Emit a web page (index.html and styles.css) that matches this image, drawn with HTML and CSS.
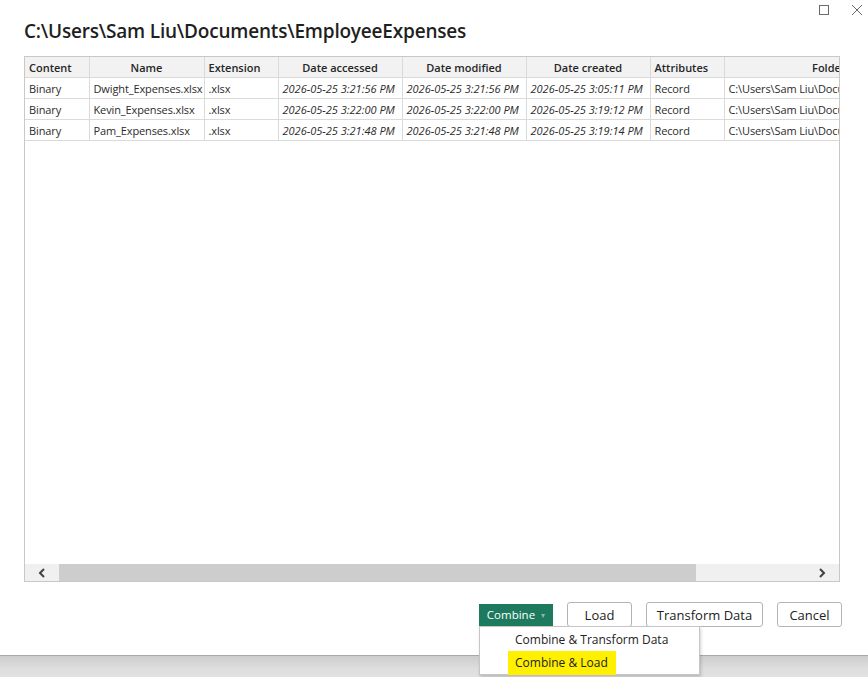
FILE: index.html
```html
<!DOCTYPE html>
<html lang="en">
<head>
<meta charset="utf-8">
<title>Folder preview</title>
<link rel="stylesheet" href="styles.css">
</head>
<body>
<div class="dialog">
  <div class="chrome">
    <svg class="chrome-btn" width="12" height="12" viewBox="0 0 12 12"><rect x="1.5" y="1.5" width="9" height="9" fill="none" stroke="#6a6a6a" stroke-width="1"/></svg>
    <svg class="chrome-btn" width="12" height="12" viewBox="0 0 12 12"><path d="M1 1 L11 11 M11 1 L1 11" stroke="#6a6a6a" stroke-width="1"/></svg>
  </div>
  <h1 class="title">C:\Users\Sam Liu\Documents\EmployeeExpenses</h1>

  <div class="grid-panel">
    <div class="grid-scroll">
      <table class="grid">
        <colgroup>
          <col class="c-content"><col class="c-name"><col class="c-ext"><col class="c-date"><col class="c-date"><col class="c-date"><col class="c-attr"><col class="c-folder">
        </colgroup>
        <thead>
          <tr>
            <th class="left">Content</th>
            <th>Name</th>
            <th class="left">Extension</th>
            <th>Date accessed</th>
            <th>Date modified</th>
            <th>Date created</th>
            <th class="left">Attributes</th>
            <th>Folder Path</th>
          </tr>
        </thead>
        <tbody>
          <tr>
            <td>Binary</td><td>Dwight_Expenses.xlsx</td><td>.xlsx</td>
            <td class="date">2026-05-25 3:21:56 PM</td><td class="date">2026-05-25 3:21:56 PM</td><td class="date">2026-05-25 3:05:11 PM</td>
            <td>Record</td><td>C:\Users\Sam Liu\Documents\EmployeeExpenses\</td>
          </tr>
          <tr>
            <td>Binary</td><td>Kevin_Expenses.xlsx</td><td>.xlsx</td>
            <td class="date">2026-05-25 3:22:00 PM</td><td class="date">2026-05-25 3:22:00 PM</td><td class="date">2026-05-25 3:19:12 PM</td>
            <td>Record</td><td>C:\Users\Sam Liu\Documents\EmployeeExpenses\</td>
          </tr>
          <tr>
            <td>Binary</td><td>Pam_Expenses.xlsx</td><td>.xlsx</td>
            <td class="date">2026-05-25 3:21:48 PM</td><td class="date">2026-05-25 3:21:48 PM</td><td class="date">2026-05-25 3:19:14 PM</td>
            <td>Record</td><td>C:\Users\Sam Liu\Documents\EmployeeExpenses\</td>
          </tr>
        </tbody>
      </table>
    </div>
    <div class="hscroll">
      <div class="hscroll-btn">
        <svg width="10" height="10" viewBox="0 0 10 10"><path d="M7 1 L3 5 L7 9" fill="none" stroke="#404040" stroke-width="2"/></svg>
      </div>
      <div class="hscroll-track"><div class="hscroll-thumb"></div></div>
      <div class="hscroll-btn">
        <svg width="10" height="10" viewBox="0 0 10 10"><path d="M3 1 L7 5 L3 9" fill="none" stroke="#404040" stroke-width="2"/></svg>
      </div>
    </div>
  </div>

  <div class="footer">
    <div class="split">
      <button class="btn-primary">Combine <span class="caret">&#9662;</span></button>
      <div class="menu">
        <div class="menu-item">Combine &amp; Transform Data</div>
        <div class="menu-item"><span class="mark">Combine &amp; Load</span></div>
      </div>
    </div>
    <button class="btn">Load</button>
    <button class="btn btn-wide">Transform Data</button>
    <button class="btn">Cancel</button>
  </div>
</div>
<div class="desktop"></div>
</body>
</html>
```

FILE: styles.css
```css
html, body {
  margin: 0;
  padding: 0;
  background: #ffffff;
  font-family: "Open Sans", "Noto Sans", sans-serif;
  color: #222;
  overflow: hidden;
}

.dialog {
  height: 656px;
  box-sizing: border-box;
  border-bottom: 1px solid #a9a9a9;
  background: #fff;
  display: flex;
  flex-direction: column;
  padding: 0 27px 0 24px;
}

/* window chrome: maximize + close */
.chrome {
  display: flex;
  justify-content: flex-end;
  gap: 21px;
  height: 15px;
  padding-top: 4px;
  margin-right: -22px;
}
.chrome-btn { display: block; }

.title {
  margin: 0;
  font-size: 19px;
  font-weight: 600;
  line-height: 24px;
  letter-spacing: -0.2px;
  color: #1f1f1f;
  height: 37px;
}

/* preview grid */
.grid-panel {
  width: 816px;
  height: 526px;
  box-sizing: border-box;
  border: 1px solid #c8c8c8;
  display: flex;
  flex-direction: column;
}
.grid-scroll {
  flex: 1;
  overflow: hidden;
}
.grid {
  border-collapse: collapse;
  table-layout: fixed;
  width: 936px;
  font-size: 11px;
  color: #2b2b2b;
}
.c-content { width: 64px; }
.c-name { width: 115px; }
.c-ext { width: 74px; }
.c-date { width: 124px; }
.c-attr { width: 74px; }
.c-folder { width: 237px; }

.grid th, .grid td {
  height: 20px;
  padding: 0 4px;
  border-right: 1px solid #dadada;
  border-bottom: 1px solid #dadada;
  white-space: nowrap;
  overflow: hidden;
  text-align: left;
}
.grid td { letter-spacing: -0.12px; }
.grid th {
  background: #f2f2f2;
  font-weight: 600;
  text-align: center;
  color: #262626;
}
.grid th.left { text-align: left; }
.grid td.date { font-style: italic; letter-spacing: 0; }

.hscroll {
  height: 17px;
  background: #f0f0f0;
  display: flex;
  align-items: stretch;
}
.hscroll-btn {
  width: 34px;
  display: flex;
  align-items: center;
  justify-content: center;
}
.hscroll-track {
  flex: 1;
  display: flex;
  align-items: stretch;
}
.hscroll-thumb {
  width: 637px;
  background: #cdcdcd;
}

/* footer buttons */
.footer {
  display: flex;
  justify-content: flex-end;
  align-items: center;
  gap: 14px;
  margin-top: 20px;
  margin-right: -1px;
}
.split { position: relative; }
.btn-primary {
  width: 74px;
  height: 22px;
  border: none;
  background: #1d7a5e;
  color: #fff;
  font-family: inherit;
  font-size: 11.5px;
  padding: 0;
  display: flex;
  align-items: center;
  justify-content: center;
  gap: 6px;
}
.caret {
  color: #8fb6a8;
  font-size: 8px;
}
.btn {
  width: 65px;
  height: 25px;
  border: 1px solid #b4b4b4;
  border-radius: 3px;
  background: #fff;
  color: #222;
  font-family: inherit;
  font-size: 13px;
  padding: 0;
}
.btn-wide { width: 117px; }

/* dropdown from the Combine button */
.menu {
  position: absolute;
  left: 0;
  top: 22px;
  width: 221px;
  box-sizing: border-box;
  background: #fff;
  border: 1px solid #c6c6c6;
  box-shadow: 1px 2px 3px rgba(0,0,0,0.18);
  padding: 2px 0 1px 35px;
  font-size: 12px;
  color: #222;
  z-index: 5;
}
.menu-item {
  height: 22px;
  line-height: 22px;
}
.mark {
  display: inline-block;
  background: #ffef00;
  margin-left: -7px;
  padding: 0 8px 0 7px;
  line-height: 24px;
}

.desktop {
  height: 21px;
  background: linear-gradient(#cdcdcd, #dedede 60%, #e2e2e2);
}
```
